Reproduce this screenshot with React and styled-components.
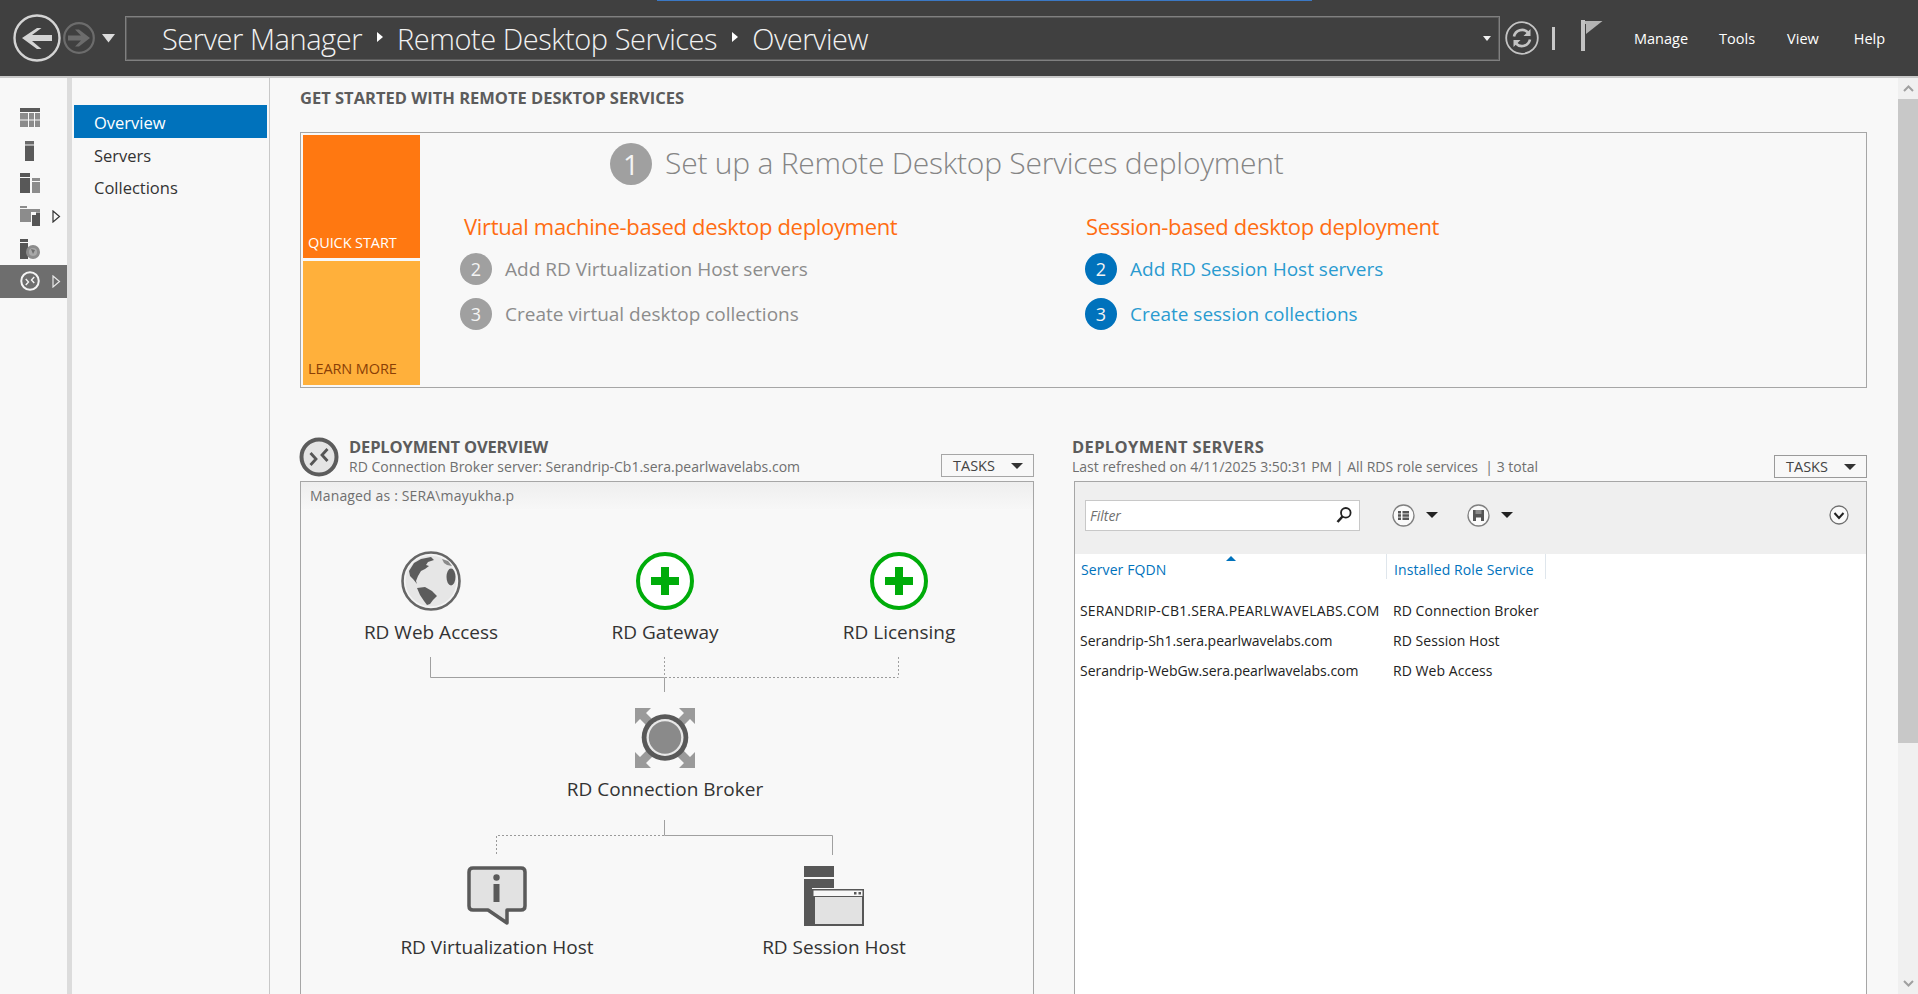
import React from 'react';
import styled, { createGlobalStyle } from 'styled-components';

const GlobalStyle = createGlobalStyle`
  html, body { margin: 0; padding: 0; height: 100%; overflow: hidden; background: #f8f8f8; }
  body { font-family: "Open Sans", "Noto Sans", "Liberation Sans", sans-serif; }
`;

const Page = styled.div`
  position: relative;
  display: flex;
  flex-direction: column;
  height: 994px;
  overflow: hidden;
`;

const RemoteBar = styled.div`
  position: absolute;
  top: 0;
  left: 657px;
  width: 655px;
  height: 1px;
  background: #3b78c4;
`;

/* top bar */
const TopBar = styled.header`
  display: flex;
  align-items: center;
  height: 76px;
  flex: none;
  background: #404040;
  border-bottom: 2px solid #c9c9c9;
  padding-left: 13px;
`;

const NavButtons = styled.div`
  display: flex;
  align-items: center;
  gap: 2px;
  width: 112px;
  flex: none;
`;

const AddressBox = styled.div`
  display: flex;
  align-items: center;
  box-sizing: border-box;
  height: 45px;
  width: 1375px;
  flex: none;
  padding: 1px 8px 0 36px;
  border: 1px solid #808080;
  outline: 1px solid #5c5c5c;
  outline-offset: -2px;
`;

const Crumb = styled.span`
  font-size: 29px;
  font-weight: 300;
  letter-spacing: -0.45px;
  color: #f2f2f2;
  white-space: nowrap;
`;

const CrumbArrow = styled.span`
  width: 0;
  height: 0;
  margin: 0 14px 4px 15px;
  border-left: 6px solid #fff;
  border-top: 5px solid transparent;
  border-bottom: 5px solid transparent;
`;

const AddressCaret = styled.span`
  margin-left: auto;
  width: 0;
  height: 0;
  border-top: 5px solid #f0f0f0;
  border-left: 4px solid transparent;
  border-right: 4px solid transparent;
`;

const BarTools = styled.div`
  display: flex;
  align-items: center;
  margin-left: 5px;
`;

const BarSeparator = styled.span`
  width: 3px;
  height: 23px;
  margin: 0 26px 0 13px;
  background: #c8c8c8;
`;

const FlagSvg = styled.svg`
  margin-bottom: 6px;
`;

const Menu = styled.nav`
  display: flex;
  margin-left: 31px;
`;

const MenuItem = styled.span`
  font-size: 14.5px;
  color: #fff;
  margin-right: ${p => p.$gap}px;
`;

/* left side */
const Main = styled.div`
  display: flex;
  flex: 1;
  min-height: 0;
`;

const Rail = styled.aside`
  width: 67px;
  flex: none;
  padding-top: 24px;
  border-right: 5px solid #dcdcdc;
`;

const RailRow = styled.div`
  position: relative;
  display: flex;
  align-items: center;
  justify-content: center;
  height: 32.6px;
  padding-right: 8px;
  background: ${p => (p.$active ? '#6e6e6e' : 'transparent')};
`;

const RailArrow = styled.svg`
  position: absolute;
  left: 52px;
  top: 10px;
`;

const NavPanel = styled.nav`
  width: 197px;
  flex: none;
  padding-top: 27px;
  border-right: 1px solid #c8c8c8;
`;

const NavItem = styled.div`
  display: flex;
  align-items: center;
  box-sizing: border-box;
  height: ${p => (p.$active ? '33px' : '32.5px')};
  margin: 0 2px;
  padding: 2px 0 0 20px;
  font-size: 16.5px;
  color: ${p => (p.$active ? '#fff' : '#333')};
  background: ${p => (p.$active ? '#0072bc' : 'transparent')};
`;

/* content */
const Content = styled.main`
  flex: 1;
  min-width: 0;
  padding: 10px 31px 0 30px;
  overflow: hidden;
`;

const PageTitle = styled.h1`
  margin: 0;
  font-size: 16.5px;
  line-height: 20px;
  font-weight: 700;
  color: #5c5c5c;
  white-space: nowrap;
`;

const QuickPanel = styled.section`
  display: flex;
  box-sizing: border-box;
  height: 256px;
  margin-top: 24px;
  padding: 2px;
  border: 1px solid #a6a6a6;
`;

const Tiles = styled.div`
  display: flex;
  flex-direction: column;
  gap: 3px;
  width: 117px;
  flex: none;
`;

const Tile = styled.div`
  display: flex;
  align-items: flex-end;
  flex: 1;
  padding: 0 0 ${p => (p.$learn ? 6 : 5)}px 5px;
  font-size: 14.5px;
  letter-spacing: -0.1px;
  line-height: 20px;
  color: ${p => (p.$learn ? '#8a3f06' : '#fff')};
  background: ${p => (p.$learn ? '#ffb03b' : '#ff7811')};
`;

const QuickBody = styled.div`
  flex: 1;
  padding: 8px 0 0 40px;
`;

const QuickTitle = styled.div`
  display: flex;
  align-items: center;
  gap: 13px;
  margin-left: 150px;
  height: 42px;
  font-size: 30px;
  font-weight: 300;
  letter-spacing: -0.23px;
  color: #858585;
  white-space: nowrap;
`;

const QuickTitleText = styled.span`
  margin-bottom: 4px;
`;

const StepColumns = styled.div`
  display: grid;
  grid-template-columns: 625px 1fr;
  margin-top: 26px;
`;

const StepHead = styled.h2`
  margin: 0 0 12px ${p => p.$indent}px;
  font-size: 22px;
  line-height: 30px;
  font-weight: 400;
  letter-spacing: -0.33px;
  color: #ff6d12;
  white-space: nowrap;
`;

const Step = styled.div`
  display: flex;
  align-items: center;
  gap: 13px;
  height: 32px;
  margin-bottom: 13px;
  font-size: 19px;
  color: ${p => (p.$link ? '#2a9bd0' : '#8c8c8c')};
  white-space: nowrap;
`;

const Badge = styled.span`
  display: flex;
  align-items: center;
  justify-content: center;
  flex: none;
  width: ${p => p.$size}px;
  height: ${p => p.$size}px;
  border-radius: 50%;
  font-size: ${p => (p.$size > 40 ? 28 : 18)}px;
  font-weight: 400;
  letter-spacing: 0;
  color: #f4f4f4;
  background: ${p => (p.$link ? '#0072bc' : '#a0a0a0')};
`;

const Sections = styled.div`
  display: grid;
  grid-template-columns: 734px 793px;
  justify-content: space-between;
  margin-top: 49px;
`;

const SectionHead = styled.div`
  position: relative;
  display: flex;
  align-items: flex-end;
  gap: 10px;
  height: 44px;
`;

const SectionIcon = styled.div`
  position: absolute;
  left: -1px;
  top: 0;
`;

const SectionText = styled.div`
  flex: 1;
  min-width: 0;
  margin-left: ${p => p.$indent}px;
  padding-bottom: 4px;
`;

const SectionTitle = styled.div`
  font-size: 16.5px;
  line-height: 20px;
  font-weight: 700;
  letter-spacing: ${p => (p.$wide ? '0.35px' : '-0.15px')};
  color: #5c5c5c;
  white-space: nowrap;
`;

const SectionSub = styled.div`
  font-size: 14px;
  line-height: 20px;
  color: #6f6f6f;
  white-space: nowrap;
`;

const TasksButton = styled.div`
  display: flex;
  align-items: center;
  justify-content: space-between;
  box-sizing: border-box;
  width: 93px;
  height: 23px;
  margin-bottom: ${p => (p.$strong ? 3 : 4)}px;
  padding: 0 10px 0 11px;
  border: 1px solid ${p => (p.$strong ? '#9a9a9a' : '#a6a6a6')};
  font-size: 14.5px;
  color: #444;
`;

const TasksCaret = styled.span`
  width: 0;
  height: 0;
  border-top: 6px solid #333;
  border-left: 6px solid transparent;
  border-right: 6px solid transparent;
`;

const Panel = styled.div`
  box-sizing: border-box;
  height: 600px;
  border: 1px solid #a6a6a6;
  background: ${p => (p.$white ? '#fff' : '#f8f8f8')};
`;

const ManagedBar = styled.div`
  display: flex;
  align-items: center;
  height: 27px;
  padding-left: 9px;
  font-size: 14px;
  letter-spacing: 0.15px;
  color: #6f6f6f;
  background: linear-gradient(to bottom, #eeeeee, #f7f7f7);
`;

const Diagram = styled.div`
  position: relative;
  height: 560px;
`;

const Wires = styled.svg`
  position: absolute;
  left: 0;
  top: 0;
`;

const Node = styled.div`
  position: absolute;
  left: ${p => p.$x}px;
  top: ${p => p.$y}px;
  display: flex;
  flex-direction: column;
  align-items: center;
  width: 260px;
  transform: translateX(-50%);
`;

const NodeLabel = styled.div`
  margin-top: 9px;
  font-size: 19px;
  line-height: 24px;
  color: #333;
  white-space: nowrap;
`;

const Toolbar = styled.div`
  position: relative;
  display: flex;
  align-items: center;
  height: 72px;
  padding: 0 17px 6px 10px;
  box-sizing: border-box;
  background: #efefef;
`;

const FilterBox = styled.div`
  display: flex;
  align-items: center;
  justify-content: space-between;
  box-sizing: border-box;
  width: 275px;
  height: 31px;
  padding: 0 7px 0 4px;
  border: 1px solid #c8c8c8;
  background: #fff;
  font-size: 14px;
  font-style: italic;
  color: #6f6f6f;
`;

const ToolButton = styled.div`
  display: flex;
  align-items: center;
  gap: 11px;
  margin-left: ${p => p.$gap}px;
`;

const ToolCaret = styled.span`
  width: 0;
  height: 0;
  border-top: 6px solid #222;
  border-left: 6px solid transparent;
  border-right: 6px solid transparent;
`;

const ColumnRow = styled.div`
  position: relative;
  display: grid;
  grid-template-columns: 312px 159px;
  height: 24px;
`;

const ColumnHead = styled.div`
  display: flex;
  align-items: center;
  padding: 6px 0 0 ${p => p.$pad}px;
  border-right: 1px solid #dfe6ec;
  font-size: 14px;
  letter-spacing: 0.1px;
  color: #0072bc;
  white-space: nowrap;
`;

const SortArrow = styled.span`
  position: absolute;
  left: 151px;
  top: 2px;
  width: 0;
  height: 0;
  border-bottom: 5px solid #0072bc;
  border-left: 5px solid transparent;
  border-right: 5px solid transparent;
`;

const Rows = styled.div`
  padding-top: 17px;
`;

const Row = styled.div`
  display: grid;
  grid-template-columns: 313px 1fr;
  height: 30px;
  align-items: center;
  padding-left: 5px;
  font-size: 14px;
  letter-spacing: 0.05px;
  color: #222;
  white-space: nowrap;
`;

const ServerName = styled.span`
  letter-spacing: ${p => (p.$caps ? '0.18px' : '-0.03px')};
`;

const ScrollTrack = styled.div`
  display: flex;
  flex-direction: column;
  width: 20px;
  flex: none;
  background: #f0f0f0;
`;

const ScrollEnd = styled.div`
  display: flex;
  align-items: center;
  justify-content: center;
  height: 21px;
  flex: none;
`;

const ScrollThumb = styled.div`
  height: 644px;
  flex: none;
  background: #c8c8c8;
`;

const ScrollGap = styled.div`
  flex: 1;
`;

/* drawings */
const BackIcon = () => (
  <svg width="48" height="48" viewBox="0 0 48 48">
    <circle cx="24" cy="24" r="22.5" fill="none" stroke="#d4d4d4" strokeWidth="2.4" />
    <path d="M9 24 L24 14 H28.500 L19 21 H39 V27 H19 L28.500 35 H24 Z" fill="#d4d4d4" />
  </svg>
);

const ForwardIcon = () => (
  <svg width="32" height="32" viewBox="0 0 32 32">
    <circle cx="16" cy="16" r="14.800" fill="none" stroke="#6c6c6c" strokeWidth="2.2" />
    <path d="M27 16 L16 7.500 H12 L18 13.500 H5 V18.500 H18 L12 24.500 H16 Z" fill="#6c6c6c" />
  </svg>
);

const HistoryCaret = () => (
  <svg width="14" height="9" viewBox="0 0 14 9" style={{ marginLeft: 5 }}>
    <path d="M0 0 H13 L6.500 8.500 Z" fill="#dcdcdc" />
  </svg>
);

const RefreshIcon = () => (
  <svg width="34" height="34" viewBox="0 0 34 34">
    <circle cx="17" cy="17" r="15.800" fill="none" stroke="#c4c4c4" strokeWidth="1.800" />
    <path d="M9 15.500 A8.200 8.200 0 0 1 23 11.500 M25 18.500 A8.200 8.200 0 0 1 11 22.500" fill="none" stroke="#c4c4c4" strokeWidth="2.600" />
    <path d="M25.500 8 V15 H18.500 Z M8.500 26 V19 H15.500 Z" fill="#c4c4c4" />
  </svg>
);

const FlagIcon = () => (
  <FlagSvg width="22" height="31" viewBox="0 0 22 31">
    <path d="M0 0 H4 V31 H0 Z" fill="#c2c2c2" />
    <path d="M4 1 H21.500 L5 14 H4 Z" fill="#b4b4b4" />
    <path d="M4 4 H5 V14 H4 Z" fill="#404040" />
  </FlagSvg>
);

const RailGrid = () => (
  <svg width="20" height="20" viewBox="0 0 20 20">
    <path d="M0 0 H20 V4 H0 Z" fill="#5a5a5a" />
    <path d="M0 5 H8 V11.500 H0 Z M0 12.500 H8 V19 H0 Z M9 5 H14 V11.500 H9 Z M9 12.500 H14 V19 H9 Z M15 5 H20 V11.500 H15 Z M15 12.500 H20 V19 H15 Z" fill="#8c8c8c" />
  </svg>
);

const RailServer = () => (
  <svg width="9" height="20" viewBox="0 0 9 20">
    <path d="M0 0 H9 V3.500 H0 Z" fill="#6a6a6a" />
    <path d="M0 4.500 H9 V20 H0 Z" fill="#5a5a5a" />
  </svg>
);

const RailServers = () => (
  <svg width="20" height="20" viewBox="0 0 20 20">
    <path d="M0 0 H10 V4 H0 Z M0 5 H10 V20 H0 Z" fill="#585858" />
    <path d="M12 5 H20 V8 H12 Z M12 9 H20 V20 H12 Z" fill="#8c8c8c" />
  </svg>
);

const RailFolder = () => (
  <svg width="20" height="20" viewBox="0 0 20 20">
    <path d="M0 0 H7 V2 H0 Z" fill="#8c8c8c" />
    <path d="M0 3 H11 V16 H0 Z" fill="#8c8c8c" />
    <path d="M11 3 H20 V6 H11 Z" fill="#8c8c8c" />
    <path d="M12 9 H16 L16 6.500 H20 V20 H12 Z" fill="#555" />
  </svg>
);

const RailGlobe = () => (
  <svg width="20" height="20" viewBox="0 0 20 20">
    <path d="M0 0 H8 V3 H0 Z M0 4 H8 V20 H0 Z" fill="#555" />
    <circle cx="13" cy="13" r="7" fill="#8c8c8c" />
    <circle cx="13" cy="13" r="4" fill="#a8a8a8" />
    <path d="M11 10 L15 11 L13 15 Z" fill="#6e6e6e" />
  </svg>
);

const RailTriangle = ({ active }) => (
  <RailArrow width="9" height="13" viewBox="0 0 9 13">
    <path d="M1 1 L7.500 6.500 L1 12 Z" fill="none" stroke={active ? '#e8e8e8' : '#333'} strokeWidth="1.200" />
  </RailArrow>
);

const BrokerGlyph = ({ size, ring, stroke, fill }) => (
  <svg width={size} height={size} viewBox="0 0 40 40">
    <circle cx="20" cy="20" r="17.500" fill={fill} stroke={ring} strokeWidth="4" />
    <path d="M11.500 16 L17 22 L11.500 28" fill="none" stroke={stroke} strokeWidth="2.800" />
    <path d="M28.500 12 L23 18 L28.500 24" fill="none" stroke={stroke} strokeWidth="2.800" />
  </svg>
);

const GlobeIcon = () => (
  <svg width="60" height="60" viewBox="0 0 60 60">
    <circle cx="30" cy="30" r="28.500" fill="#f4f4f4" stroke="#666" strokeWidth="2.600" />
    <circle cx="30" cy="30" r="25.500" fill="#e6e6e6" />
    <path d="M8 20 L13 12 L20 8 L30 6 L33 9 L27 11 L25 14 L28 15 L24 18 L20 20 L17 25 L15 30 L16 33 L12 28 L9 25 Z" fill="#5c5c5c" />
    <path d="M41 8 L47 10 L51 15 L46 14 L43 12 Z" fill="#8a8a8a" />
    <ellipse cx="50" cy="26" rx="4.500" ry="8.500" fill="#5c5c5c" />
    <path d="M16 37 L24 36 L31 40 L36 45 L32 49 L29 53 L26 54 L23 50 L19 44 Z" fill="#5c5c5c" />
  </svg>
);

const PlusIcon = () => (
  <svg width="60" height="60" viewBox="0 0 60 60">
    <circle cx="30" cy="30" r="27" fill="#fff" stroke="#00ac0a" strokeWidth="4" />
    <path d="M26 16 H34 V26 H44 V34 H34 V44 H26 V34 H16 V26 H26 Z" fill="#00ac0a" />
  </svg>
);

const ConnectionIcon = () => (
  <svg width="60" height="60" viewBox="0 0 60 60">
    <path d="M0 0 H16 L11 5 L18 12 L12 18 L5 11 L0 16 Z M60 0 H44 L49 5 L42 12 L48 18 L55 11 L60 16 Z M0 60 H16 L11 55 L18 48 L12 42 L5 49 L0 44 Z M60 60 H44 L49 55 L42 48 L48 42 L55 49 L60 44 Z" fill="#9a9a9a" />
    <circle cx="30" cy="29.500" r="23.300" fill="#595959" />
    <circle cx="30" cy="29.500" r="18.500" fill="#e8e8e8" />
    <circle cx="30" cy="29.500" r="16.200" fill="#8a8a8a" />
  </svg>
);

const InfoIcon = () => (
  <svg width="60" height="60" viewBox="0 0 60 60">
    <path d="M6 2 H54 Q58 2 58 6 V40 Q58 44 54 44 H40 V57 L21 44 H6 Q2 44 2 40 V6 Q2 2 6 2 Z" fill="#e2e2e2" stroke="#5a5a5a" strokeWidth="3.500" strokeLinejoin="round" />
    <circle cx="29.500" cy="11.500" r="3.200" fill="#5a5a5a" />
    <path d="M26.500 18 H32.500 V36 H26.500 Z" fill="#5a5a5a" />
  </svg>
);

const SessionIcon = () => (
  <svg width="60" height="60" viewBox="0 0 60 60">
    <path d="M0 0 H30 V11 H0 Z M0 13 H30 V22 H8 V60 H0 Z" fill="#575757" />
    <path d="M8 23 H60 V60 H8 Z" fill="#575757" />
    <path d="M11 31 H58 V58 H11 Z" fill="#e2e2e2" />
    <path d="M9.500 24.500 H58.500 V30 H9.500 Z" fill="#f8f8f8" />
    <path d="M50 26 H52.500 V28.500 H50 Z M54.500 26 H57 V28.500 H54.500 Z" fill="#575757" />
  </svg>
);

const SearchIcon = () => (
  <svg width="16" height="18" viewBox="0 0 16 18">
    <circle cx="9.800" cy="6.800" r="4.800" fill="none" stroke="#222" strokeWidth="1.800" />
    <path d="M6.500 10.500 L1.500 16" stroke="#222" strokeWidth="2.600" />
  </svg>
);

const ListIcon = () => (
  <svg width="23" height="23" viewBox="0 0 23 23">
    <circle cx="11.500" cy="11.500" r="10.500" fill="#fafafa" stroke="#808080" strokeWidth="1.300" />
    <path d="M6 7 H9 V9.500 H6 Z M6 10.300 H9 V12.700 H6 Z M6 13.500 H9 V16 H6 Z" fill="#555" />
    <path d="M10.500 7 H17 V9.500 H10.500 Z M10.500 10.300 H17 V12.700 H10.500 Z M10.500 13.500 H17 V16 H10.500 Z" fill="#555" />
  </svg>
);

const SaveIcon = () => (
  <svg width="23" height="23" viewBox="0 0 23 23">
    <circle cx="11.500" cy="11.500" r="10.500" fill="#fafafa" stroke="#808080" strokeWidth="1.300" />
    <path d="M6 6 H17 V17 H14 V13.500 H9 V17 H6 Z" fill="#555" />
    <path d="M8.500 6 H14.500 V10 H8.500 Z" fill="#8a8a8a" />
  </svg>
);

const ExpandIcon = () => (
  <svg width="20" height="20" viewBox="0 0 20 20" style={{ marginLeft: 'auto' }}>
    <circle cx="10" cy="10" r="9" fill="#fafafa" stroke="#707070" strokeWidth="1.300" />
    <path d="M5.500 8 L10 13 L14.500 8" fill="none" stroke="#222" strokeWidth="2" />
  </svg>
);

const ChevronUp = () => (
  <svg width="11" height="7" viewBox="0 0 11 7">
    <path d="M1 6 L5.500 1.500 L10 6" fill="none" stroke="#a0a0a0" strokeWidth="2" />
  </svg>
);

const ChevronDown = () => (
  <svg width="11" height="7" viewBox="0 0 11 7">
    <path d="M1 1 L5.500 5.500 L10 1" fill="none" stroke="#a0a0a0" strokeWidth="2" />
  </svg>
);

const ConnectorLines = () => (
  <Wires width="732" height="560">
    <g transform="translate(-301 -508)" fill="none" strokeWidth="1">
      <path d="M430.500 656 V676.500 H664.500 M664.500 676.500 V691" stroke="#a0a0a0" />
      <path d="M664.500 656 V676 M898.500 656 V676.500" stroke="#a0a0a0" strokeDasharray="2 2" />
      <path d="M665 676.500 H898" stroke="#9a9a9a" strokeDasharray="2 2" />
      <path d="M664.500 819 V834.500 M664.500 834.500 H832.500 V854" stroke="#a0a0a0" />
      <path d="M664 834.500 H496.500 V854" stroke="#9a9a9a" strokeDasharray="2 2" />
    </g>
  </Wires>
);

const railIcons = [RailGrid, RailServer, RailServers, RailFolder, RailGlobe];
const servers = [
  ['SERANDRIP-CB1.SERA.PEARLWAVELABS.COM', 'RD Connection Broker', true],
  ['Serandrip-Sh1.sera.pearlwavelabs.com', 'RD Session Host', false],
  ['Serandrip-WebGw.sera.pearlwavelabs.com', 'RD Web Access', false],
];

export default function App() {
  return (
    <Page>
      <GlobalStyle />
      <RemoteBar />
      <TopBar>
        <NavButtons>
          <BackIcon />
          <ForwardIcon />
          <HistoryCaret />
        </NavButtons>
        <AddressBox>
          <Crumb>Server Manager</Crumb>
          <CrumbArrow />
          <Crumb>Remote Desktop Services</Crumb>
          <CrumbArrow />
          <Crumb>Overview</Crumb>
          <AddressCaret />
        </AddressBox>
        <BarTools>
          <RefreshIcon />
          <BarSeparator />
          <FlagIcon />
        </BarTools>
        <Menu>
          <MenuItem $gap={31}>Manage</MenuItem>
          <MenuItem $gap={32}>Tools</MenuItem>
          <MenuItem $gap={35}>View</MenuItem>
          <MenuItem $gap={0}>Help</MenuItem>
        </Menu>
      </TopBar>

      <Main>
        <Rail>
          {railIcons.map((Icon, i) => (
            <RailRow key={i}>
              <Icon />
              {i === 3 && <RailTriangle />}
            </RailRow>
          ))}
          <RailRow $active>
            <BrokerGlyph size={20} ring="#f4f4f4" stroke="#f4f4f4" fill="#6e6e6e" />
            <RailTriangle active />
          </RailRow>
        </Rail>

        <NavPanel>
          <NavItem $active>Overview</NavItem>
          <NavItem>Servers</NavItem>
          <NavItem>Collections</NavItem>
        </NavPanel>

        <Content>
          <PageTitle>GET STARTED WITH REMOTE DESKTOP SERVICES</PageTitle>

          <QuickPanel>
            <Tiles>
              <Tile>QUICK START</Tile>
              <Tile $learn>LEARN MORE</Tile>
            </Tiles>
            <QuickBody>
              <QuickTitle>
                <Badge $size={42}>1</Badge>
                <QuickTitleText>Set up a Remote Desktop Services deployment</QuickTitleText>
              </QuickTitle>
              <StepColumns>
                <div>
                  <StepHead $indent={4}>Virtual machine-based desktop deployment</StepHead>
                  <Step><Badge $size={32}>2</Badge>Add RD Virtualization Host servers</Step>
                  <Step><Badge $size={32}>3</Badge>Create virtual desktop collections</Step>
                </div>
                <div>
                  <StepHead $indent={1}>Session-based desktop deployment</StepHead>
                  <Step $link><Badge $size={32} $link>2</Badge>Add RD Session Host servers</Step>
                  <Step $link><Badge $size={32} $link>3</Badge>Create session collections</Step>
                </div>
              </StepColumns>
            </QuickBody>
          </QuickPanel>

          <Sections>
            <div>
              <SectionHead>
                <SectionIcon>
                  <BrokerGlyph size={40} ring="#5c5c5c" stroke="#555" fill="#e4e4e4" />
                </SectionIcon>
                <SectionText $indent={49}>
                  <SectionTitle>DEPLOYMENT OVERVIEW</SectionTitle>
                  <SectionSub>RD Connection Broker server: Serandrip-Cb1.sera.pearlwavelabs.com</SectionSub>
                </SectionText>
                <TasksButton>TASKS<TasksCaret /></TasksButton>
              </SectionHead>
              <Panel>
                <ManagedBar>Managed as : SERA\mayukha.p</ManagedBar>
                <Diagram>
                  <ConnectorLines />
                  <Node $x={130} $y={42}><GlobeIcon /><NodeLabel>RD Web Access</NodeLabel></Node>
                  <Node $x={364} $y={42}><PlusIcon /><NodeLabel>RD Gateway</NodeLabel></Node>
                  <Node $x={598} $y={42}><PlusIcon /><NodeLabel>RD Licensing</NodeLabel></Node>
                  <Node $x={364} $y={199}><ConnectionIcon /><NodeLabel>RD Connection Broker</NodeLabel></Node>
                  <Node $x={196} $y={357}><InfoIcon /><NodeLabel>RD Virtualization Host</NodeLabel></Node>
                  <Node $x={533} $y={357}><SessionIcon /><NodeLabel>RD Session Host</NodeLabel></Node>
                </Diagram>
              </Panel>
            </div>

            <div>
              <SectionHead>
                <SectionText $indent={-2}>
                  <SectionTitle $wide>DEPLOYMENT SERVERS</SectionTitle>
                  <SectionSub>Last refreshed on 4/11/2025 3:50:31 PM | All RDS role services&nbsp; | 3 total</SectionSub>
                </SectionText>
                <TasksButton $strong>TASKS<TasksCaret /></TasksButton>
              </SectionHead>
              <Panel $white>
                <Toolbar>
                  <FilterBox>Filter<SearchIcon /></FilterBox>
                  <ToolButton $gap={32}><ListIcon /><ToolCaret /></ToolButton>
                  <ToolButton $gap={29}><SaveIcon /><ToolCaret /></ToolButton>
                  <ExpandIcon />
                </Toolbar>
                <ColumnRow>
                  <ColumnHead $pad={6}>Server FQDN</ColumnHead>
                  <SortArrow />
                  <ColumnHead $pad={7}>Installed Role Service</ColumnHead>
                </ColumnRow>
                <Rows>
                  {servers.map(([name, role, caps]) => (
                    <Row key={name}>
                      <ServerName $caps={caps}>{name}</ServerName>
                      <span>{role}</span>
                    </Row>
                  ))}
                </Rows>
              </Panel>
            </div>
          </Sections>
        </Content>

        <ScrollTrack>
          <ScrollEnd><ChevronUp /></ScrollEnd>
          <ScrollThumb />
          <ScrollGap />
          <ScrollEnd><ChevronDown /></ScrollEnd>
        </ScrollTrack>
      </Main>
    </Page>
  );
}
